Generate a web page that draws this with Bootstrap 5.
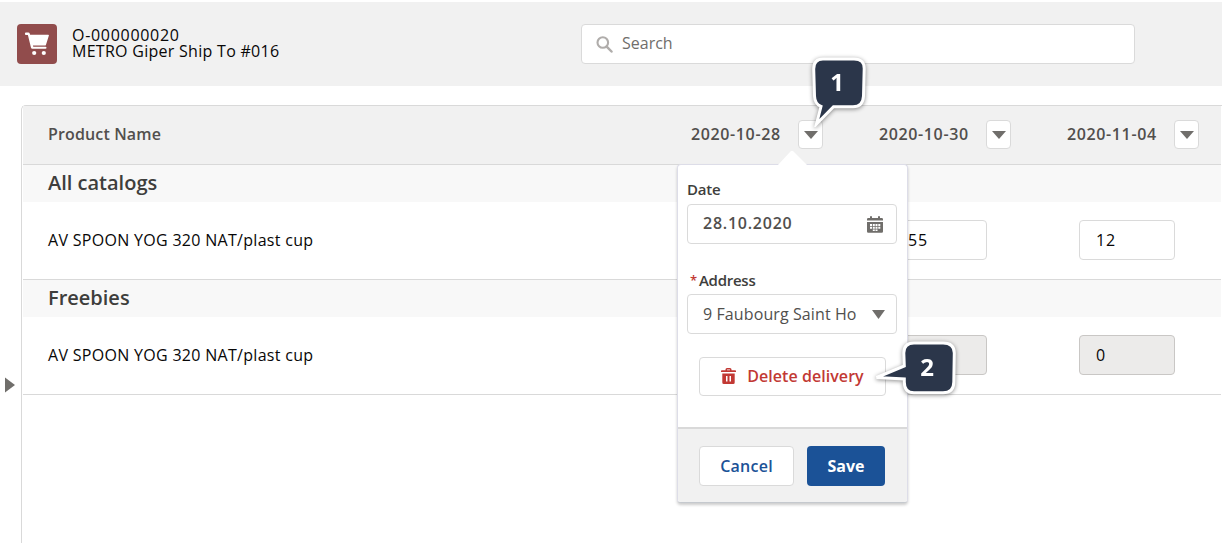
<!DOCTYPE html>
<html lang="en">
<head>
<meta charset="utf-8">
<meta name="viewport" content="width=device-width, initial-scale=1">
<title>Order deliveries</title>
<link href="https://cdn.jsdelivr.net/npm/bootstrap@5.3.0/dist/css/bootstrap.min.css" rel="stylesheet">
<style>
body{font-family:"Open Sans","Noto Sans",sans-serif;font-size:16px;line-height:16px;color:#080707;height:543px;overflow:hidden;background:#fff;white-space:nowrap}
svg{flex:none}
.topbar{margin-top:2px;height:84px;background:#f1f1f1;padding-left:17px}
.logo{width:40px;height:40px;border-radius:4px;background:#914c4c}
.title{margin-left:15px;width:509px;letter-spacing:.28px;padding-bottom:2px}
.title .num{letter-spacing:.7px}
.field{background:#fff;border:1px solid #dadada;border-radius:4px;height:40px}
.search{width:554px;padding-left:14px;color:#706e6b}
.search span{margin-left:9px;padding-bottom:2px}
.panel{margin:19px 0 0 21px;border:1px solid #d9d9d9;border-width:1px 0 0 1px;border-radius:5px 0 0 0;height:438px;padding:0 1px}
.line{display:grid;grid-template-columns:644px 188px 188px 178px;border-bottom:1px solid #d9d9d9;align-items:center}
.line>*{padding-left:24px}
.line>:first-child{padding-left:25px}
.heads{height:59px;background:#f1f1f1;color:#514f4d;font-weight:600}
.heads .date{letter-spacing:.62px;padding-bottom:1px}
.heads .pname{letter-spacing:.14px;padding-bottom:2px}
.heads .date span{width:107px;padding-bottom:1px}
.drop{width:25px;height:29px;padding:0}
.group{height:37px;background:#f8f8f8;padding:0 0 1px 25px;font-size:20px;font-weight:600;color:#3e3e3c}
.item{height:78px}
.item .pname{letter-spacing:.3px;padding-bottom:2px}
.line>.qty{width:96px;margin:0 0 1px 36px;padding-left:16px;letter-spacing:.8px}
.qty.off{background:#ecebea;border-color:#c9c7c5}
.pop{left:677px;top:164px;width:231px;height:339px;background:#fff;border:1px solid #dddde8;border-bottom-color:#c5c9ce;border-radius:4px;box-shadow:0 2px 3px rgba(0,0,0,.2);z-index:3}
.main-part{height:262px;padding:16px 10px 0 9px}
.foot{height:75px;background:#f1f1f1;border-top:2px solid #d9d9d9;border-radius:0 0 3px 3px;padding:17px 0 0 21px;gap:13px}
.nub{left:99px;top:-15px}
.lbl{color:#3e3e3c;font-weight:600;font-size:15px;line-height:16px;letter-spacing:-.25px}
.lbl+.field{margin-top:7px;padding:0 13px 0 15px}
.lbl.addr+.field{margin-top:6px}
.dark{color:#514f4d}
.datum{letter-spacing:.75px;padding-bottom:2px}
.req{color:#c23934;font-size:13px;margin:0 2px 0 3px}
.addr{margin-top:28px}
.act{font-weight:600;font-size:16px;line-height:16px;padding:0 0 1px;border-radius:4px}
.del{width:187px;height:39px;margin:23px 0 0 12px;color:#c23934;background:#fff;border:1px solid #dadada;gap:11px;letter-spacing:.05px}
.cancel{width:95px;height:40px;color:#1b5297;background:#fff;border:1px solid #dadada;letter-spacing:.25px}
.save{width:78px;height:40px;color:#fff;background:#1b5297;font-weight:700}
.callout{z-index:5;filter:drop-shadow(0 1px 2px rgba(0,0,0,.45))}
.callout text{font:700 24px "Noto Sans","Open Sans",sans-serif;fill:#fff;stroke:none}
.one{left:806px;top:51px}
.two{left:869px;top:335px}
.side{left:5px;top:377px}
</style>
</head>
<body class="position-relative">
<header class="topbar d-flex align-items-center">
  <div class="logo d-flex"><svg width="40" height="40" viewBox="0 0 40 40" fill="#fff"><path d="M9 8.600h2.300q1.100 0 1.500 1.100l.3 1H31.200q.9 0 .7.900l-2.900 9.100q-.3.900-1.200.9H15.900l.4 1.200h12.200q1 0 1 .95t-1 .95H15.300q-1 0-1.300-1L10.900 11H9q-1.100 0-1.100-1.200T9 8.600z"/><circle cx="17.200" cy="29" r="2.100"/><circle cx="26.800" cy="29" r="2.100"/></svg></div>
  <div class="title"><div class="num">O-000000020</div><div>METRO Giper Ship To #016</div></div>
  <div class="field search d-flex align-items-center"><svg width="17" height="17" viewBox="0 0 17 17" fill="none" stroke="#b0adab"><circle cx="6.800" cy="6.500" r="5.300" stroke-width="2.100"/><path d="M10.700 10.600L15.500 15.500" stroke-width="2.500" stroke-linecap="round"/></svg><span>Search</span></div>
</header>
<main class="panel">
  <div class="line heads">
    <div class="pname">Product Name</div>
    <div class="date d-flex align-items-center"><span>2020-10-28</span><button class="field drop d-flex align-items-center justify-content-center"><svg width="14" height="8"><path d="M0 0h14L7 8z" fill="#706e6b"/></svg></button></div>
    <div class="date d-flex align-items-center"><span>2020-10-30</span><button class="field drop d-flex align-items-center justify-content-center"><svg width="14" height="8"><path d="M0 0h14L7 8z" fill="#706e6b"/></svg></button></div>
    <div class="date d-flex align-items-center"><span>2020-11-04</span><button class="field drop d-flex align-items-center justify-content-center"><svg width="14" height="8"><path d="M0 0h14L7 8z" fill="#706e6b"/></svg></button></div>
  </div>
  <div class="group d-flex align-items-center">All catalogs</div>
  <div class="line item"><div class="pname">AV SPOON YOG 320 NAT/plast cup</div><div class="field qty"></div><div class="field qty d-flex align-items-center">55</div><div class="field qty d-flex align-items-center">12</div></div>
  <div class="group d-flex align-items-center">Freebies</div>
  <div class="line item"><div class="pname">AV SPOON YOG 320 NAT/plast cup</div><div class="field qty off"></div><div class="field qty off"></div><div class="field qty off d-flex align-items-center">0</div></div>
</main>
<svg class="side position-absolute" width="10" height="16"><path d="M0 .5L10 8 0 15.500z" fill="#706e6b"/></svg>

<section class="pop position-absolute">
  <svg class="nub position-absolute" width="31" height="16"><path d="M0 16L13.500 1.500q1.500-1.500 3 0L31 16z" fill="#fff"/></svg>
  <div class="main-part">
    <div class="lbl">Date</div>
    <div class="field dark d-flex align-items-center justify-content-between fw-semibold"><span class="datum">28.10.2020</span>
      <svg width="16" height="17" viewBox="0 0 16 17" fill="#706e6b"><path d="M1.200 2H3V1q0-1 1-1t1 1v1h6V1q0-1 1-1t1 1v1h1.800Q16 2 16 3.200V4.500H0V3.200Q0 2 1.200 2zM0 6h16v9.500q0 1.200-1.200 1.200H1.200Q0 16.700 0 15.500z"/><path d="M3 8h2v2H3zm2.800 0h2v2h-2zm2.700 0h2v2h-2zm2.800 0h2v2h-2zM3 10.700h2v2H3zm2.800 0h2v2h-2zm2.700 0h2v2h-2zm2.800 0h2v2h-2zM5.800 13.400h2v1.500h-2zm2.700 0h2v1.500h-2z" fill="#fff"/></svg></div>
    <div class="lbl addr d-flex"><span class="req">*</span>Address</div>
    <div class="field dark d-flex align-items-center justify-content-between pe-2"><span style="letter-spacing:.1px">9 Faubourg Saint Ho</span><svg style="margin-right:3px" width="13" height="9"><path d="M0 0h13L6.500 9z" fill="#706e6b"/></svg></div>
    <button class="act del d-flex align-items-center justify-content-center"><svg width="15" height="16" viewBox="0 0 15 16" fill="#c23934"><path d="M.8 2.300H4.500V1.500Q4.500 0 6 0h3q1.500 0 1.500 1.500v.8h3.700q.8 0 .8.800v.8H0v-.8q0-.8.800-.8zM6 2.300h3V1.500H6zM1.300 5.500h12.400v9q0 1.500-1.500 1.500H2.800q-1.500 0-1.500-1.500zM5 8v5.500h1.500V8zm3.500 0v5.500H10V8z" fill-rule="evenodd"/></svg>Delete delivery</button>
  </div>
  <div class="foot d-flex"><button class="act cancel">Cancel</button><button class="act save border-0">Save</button></div>
</section>

<svg class="callout one position-absolute" width="64" height="76" viewBox="806 51 64 76"><path d="M823 59H854Q864.500 59 864.200 69L863.500 96Q863 106.800 853 106.800H833.500L816.500 124 821 106.500Q814.800 104 814.500 96L813.700 69Q813.700 59 823 59z" fill="#2b364a" stroke="#fff" stroke-width="3"/><text x="830.300" y="91">1</text></svg>
<svg class="callout two position-absolute" width="94" height="64" viewBox="869 335 94 64"><path d="M914 343H943Q954.300 343 954.300 353L953.800 382Q953.800 392.800 943 392.800H914Q904.300 392.800 904.300 382V379L876.500 377.500 904.300 366 903.800 353Q903.800 343 914 343z" fill="#2b364a" stroke="#fff" stroke-width="3"/><text x="920.300" y="376">2</text></svg>
<script src="https://cdn.jsdelivr.net/npm/bootstrap@5.3.0/dist/js/bootstrap.bundle.min.js"></script>
</body>
</html>
